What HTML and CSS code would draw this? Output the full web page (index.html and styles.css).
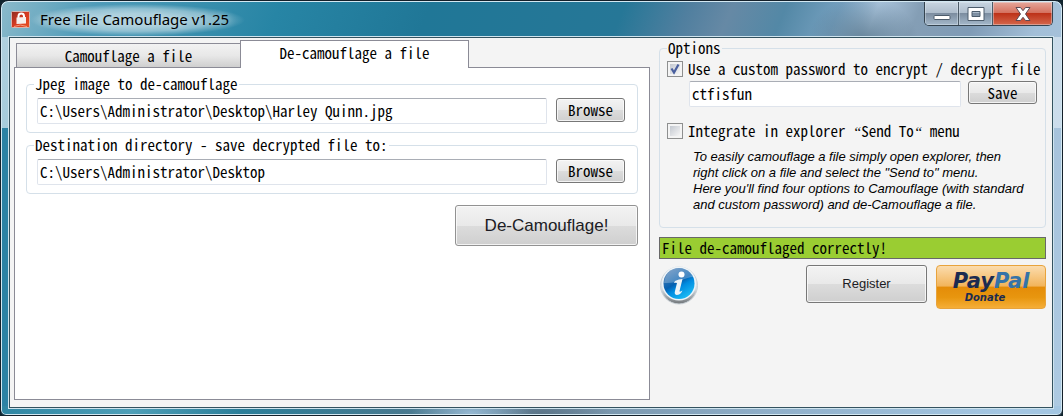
FILE: index.html
```html
<!DOCTYPE html>
<html lang="en">
<head>
<meta charset="utf-8">
<title>Free File Camouflage v1.25</title>
<link rel="stylesheet" href="styles.css">
</head>
<body>
<div class="window">
  <header class="titlebar">
    <svg class="app-icon" viewBox="0 0 19 17" aria-hidden="true">
      <defs><linearGradient id="red" x1="0" y1="0" x2="1" y2="1"><stop offset="0" stop-color="#8d2a20"/><stop offset=".5" stop-color="#d63a22"/><stop offset="1" stop-color="#e8501f"/></linearGradient></defs>
      <rect x=".5" y=".5" width="18" height="16" rx="1" fill="url(#red)" stroke="#d9b4ae"/>
      <path d="M7.500 7.500V5q.2-2.500 2.800-2.500T13 5v2" fill="none" stroke="#fff" stroke-width="2"/>
      <path d="M5.500 6.500l9.500-.5v6.500l-9.500.5z" fill="#f6efed"/>
      <path d="M3 15.500q6-3 13 0" fill="none" stroke="#f49a7c" stroke-width="1"/>
    </svg>
    <h1 class="title">Free File Camouflage v1.25</h1>
    <div class="caption-buttons">
      <button class="caption" type="button" aria-label="Minimize"><svg width="20" height="16" viewBox="0 0 20 16"><rect x="2" y="9.500" width="16" height="4" rx="1" fill="#fff" stroke="#4c5c6c"/></svg></button>
      <button class="caption" type="button" aria-label="Maximize"><svg width="18" height="16" viewBox="0 0 18 16"><path d="M1 1.500h16v13H1zM5 5.500v5h8v-5z" fill="#fff" fill-rule="evenodd" stroke="#4c5c6c"/></svg></button>
      <button class="caption close" type="button" aria-label="Close"><svg width="18" height="16" viewBox="0 0 18 16"><path d="M2 1.500h4.500L9 4.700l2.500-3.200H16L11.500 8l4.500 6.500h-4.500L9 11.300l-2.500 3.200H2L6.500 8z" fill="#fff" stroke="#5b4a55"/></svg></button>
    </div>
  </header>
  <main class="client">
    <section class="tabs">
      <div class="tablist" role="tablist">
        <button class="tab" type="button" role="tab" aria-selected="false">Camouflage a file</button>
        <button class="tab active" type="button" role="tab" aria-selected="true">De-camouflage a file</button>
      </div>
      <div class="panel" role="tabpanel">
        <fieldset class="group">
          <legend><label for="source">Jpeg image to de-camouflage</label></legend>
          <div class="field-row">
            <input class="text" id="source" type="text" value="C:\Users\Administrator\Desktop\Harley Quinn.jpg">
            <button class="btn" type="button">Browse</button>
          </div>
        </fieldset>
        <fieldset class="group">
          <legend><label for="target">Destination directory - save decrypted file to:</label></legend>
          <div class="field-row">
            <input class="text" id="target" type="text" value="C:\Users\Administrator\Desktop">
            <button class="btn" type="button">Browse</button>
          </div>
        </fieldset>
        <button class="btn primary" type="button">De-Camouflage!</button>
      </div>
    </section>
    <section class="side">
      <fieldset class="group options">
        <legend>Options</legend>
        <label class="check"><input type="checkbox" checked><span class="caption-text">Use a custom password to encrypt / decrypt file</span></label>
        <div class="field-row password">
          <input class="text" type="text" value="ctfisfun" aria-label="Custom password">
          <button class="btn" type="button">Save</button>
        </div>
        <label class="check"><input type="checkbox"><span class="caption-text">Integrate in explorer <span class="quote">“</span>Send To<span class="quote">“</span> menu</span></label>
        <p class="hint">To easily camouflage a file simply open explorer, then<br>right click on a file and select the "Send to" menu.<br>Here you'll find four options to Camouflage (with standard<br>and custom password) and de-Camouflage a file.</p>
      </fieldset>
      <output class="status">File de-camouflaged correctly!</output>
      <div class="actions">
        <button class="info" type="button" aria-label="About">
          <svg width="40" height="40" viewBox="0 0 40 40">
            <defs>
              <linearGradient id="rim" x1="0" y1="0" x2="0" y2="1"><stop offset="0" stop-color="#f4f8fb"/><stop offset=".6" stop-color="#d5dce2"/><stop offset="1" stop-color="#6f7478"/></linearGradient>
              <linearGradient id="disc" x1=".2" y1="0" x2=".8" y2="1"><stop offset="0" stop-color="#5583b5"/><stop offset=".45" stop-color="#0560b0"/><stop offset=".6" stop-color="#008be0"/><stop offset="1" stop-color="#20c4f8"/></linearGradient>
            </defs>
            <circle cx="20" cy="20.500" r="18.500" fill="url(#rim)" stroke="#cbd3d9"/>
            <circle cx="20" cy="18.500" r="17" fill="#eef4f8"/>
            <circle cx="20" cy="18.500" r="15.500" fill="url(#disc)"/>
            <path d="M5 18C6 8 13 3 20 3s12 4 14 9c-8 0-15 7-29 6z" fill="#fff" opacity=".25"/>
            <circle cx="22.500" cy="9.500" r="3" fill="#fff"/>
            <path d="M16 16q4-2 7.500-2l-3 12q0 1.500 3-.5-2 4.500-6 4.500-2.500-.5-1.500-4l2-8q-1-.5-3 0z" fill="#eef3f7"/>
          </svg>
        </button>
        <button class="btn register" type="button">Register</button>
        <button class="paypal" type="button"><span class="brand">Pay<span class="pal">Pal</span></span><span class="donate">Donate</span></button>
      </div>
    </section>
  </main>
</div>
</body>
</html>
```
FILE: styles.css
```css
* { box-sizing: border-box; }
body {
  margin: 0;
  background: #10242e;
  color: #000;
  font-family: "Noto Sans Mono CJK SC", "Liberation Mono", monospace;
  font-size: 15px;
  line-height: 16px;
}
button, input { font: inherit; color: inherit; margin: 0; padding: 0; }
.window {
  min-height: 100vh;
  display: flex;
  flex-direction: column;
  padding: 1px 9px 7px 8px;
  border: 1px solid #14202a;
  border-radius: 8px 8px 6px 6px;
  box-shadow: inset 0 0 0 1px #d3e8f2;
  background:
    linear-gradient(#cfe3ee99, #cfe3ee99) left 36px / 8px 91px no-repeat,
    linear-gradient(#e4eef699, #e4eef699) right 36px / 9px 91px no-repeat,
    radial-gradient(ellipse 60px 20px at 470px 412px, #a3c4dfcc, #a3c4df00),
    radial-gradient(ellipse 70px 20px at 540px 412px, #586f82cc, #586f8200),
    linear-gradient(90deg, #2f86a3 0, #4e9fb8 130px, #2b7e99 240px, #47798f 400px, #7794aa 580px, #8faec8 760px, #a3c6e2 1000px) bottom / 100% 9px no-repeat,
    linear-gradient(#2c82a4, #2c82a4) left 127px / 8px 100% no-repeat,
    radial-gradient(ellipse 55px 44px at 862px 40px, #4c6b80bb, #4c6b8000),
    linear-gradient(112deg, #8bbacb 0, #4f9bb8 90px, #2785a5 260px, #207797 400px, #267797 580px, #507f9f 640px, #6689a5 680px, #5388a6 730px, #749fbe 780px, #abc5dd 815px, #849eb5 855px, #7f9bb6 910px, #a3bfd8 970px, #adcae2 100%);
}
.titlebar { display: flex; height: 35px; padding-left: 2px; align-items: center; flex: none; }
.app-icon { width: 19px; height: 17px; }
.title {
  margin: 0 auto 0 0;
  padding: 5px 16px 7px 10px;
  background: radial-gradient(closest-side, #ffffff88 40%, #ffffff66 70%, #ffffff00);
  text-shadow: 0 0 8px #ffffff99;
  font: 15px/20px "Noto Sans", "Open Sans", sans-serif;
}
.caption-buttons {
  display: flex;
  align-self: flex-start;
  height: 24px;
  border: 1px solid #34434f;
  border-top: 0;
  border-radius: 0 0 5px 5px;
  overflow: hidden;
}
.caption {
  display: grid;
  place-items: center;
  width: 34px;
  border: 0;
  border-right: 1px solid #4c5b68;
  background: linear-gradient(#c8d5e1, #adbccb 48%, #7c8da0 50%, #a4b8ca);
  box-shadow: inset 0 0 0 1px #e4edf566;
}
.caption.close { width: 59px; border-right: 0; background: linear-gradient(#e6a79b, #d4705e 48%, #bd3219 50%, #d5674c); }
.client {
  flex: 1;
  display: flex;
  gap: 9px;
  padding: 2px 6px 7px 4px;
  background: #f4f4f4;
  border: 1px solid #34525f;
  box-shadow: 0 0 0 1px #cfe4ee;
}
.tabs { flex: 636; min-width: 0; display: flex; flex-direction: column; }
.tablist { display: flex; align-items: flex-end; padding-left: 2px; }
.tab {
  width: 225px;
  height: 24px;
  border: 1px solid #8b8b96;
  border-bottom: 0;
  background: linear-gradient(#f2f2f2, #e8e8e8 50%, #cfcfcf);
}
.tab.active { position: relative; width: 229px; height: 28px; margin: 0 0 -1px -1px; padding-bottom: 3px; background: #fff; }
.panel {
  flex: 1;
  display: flex;
  flex-direction: column;
  gap: 4px;
  padding: 8px 11px;
  background: #fff;
  border: 1px solid #8b8b96;
}
.group { min-width: 0; margin: 0; padding: 6px 12px 8px 10px; border: 1px solid #d5e0e9; border-radius: 4px; }
.group legend { margin-left: -3px; padding: 0 1px; }
.field-row { display: flex; align-items: flex-start; gap: 9px; }
.text {
  flex: 1;
  min-width: 0;
  height: 26px;
  padding: 0 2px 2px;
  background: #fff;
  border: 1px solid #dfe4ec;
  border-top-color: #a9adb5;
  border-radius: 2px;
}
.btn {
  width: 69px;
  height: 24px;
  border: 1px solid #777;
  border-radius: 3px;
  background: linear-gradient(#f3f3f3, #e9e9e9 50%, #dcdcdc 51%, #cfcfcf);
  box-shadow: inset 0 0 0 1px #fbfbfbcc;
}
.primary { align-self: flex-end; width: 183px; height: 41px; margin-top: 7px; border-color: #929292; color: #1c1c24; font: 17px/20px "Liberation Sans", Arial, sans-serif; }
.side { flex: 387; min-width: 0; }
.options { padding: 4px 8px 14px 7px; }
.options legend { margin-left: 0; }
.check { display: flex; align-items: center; gap: 4px; height: 18px; }
.caption-text { flex: none; padding: 0 1px; background: #f4f4f4; white-space: nowrap; }
.quote { font-family: "Liberation Serif", serif; font-style: italic; }
.check input {
  appearance: none;
  flex: none;
  width: 16px;
  height: 16px;
  border: 1px solid #8e8f8f;
  background: linear-gradient(135deg, #c3c8d0, #f6f6f6) center / 10px 10px no-repeat #f4f4f4;
}
.check input:checked {
  background: url("data:image/svg+xml,%3Csvg xmlns='http://www.w3.org/2000/svg' viewBox='0 0 14 14'%3E%3Cpath d='M3.500 6.500l2.500 4 4.500-8' fill='none' stroke='%234a5f9e' stroke-width='2.200'/%3E%3C/svg%3E") center / 14px 14px no-repeat, linear-gradient(135deg, #c3c8d0, #f6f6f6) center / 10px 10px no-repeat #f4f4f4;
}
.password { gap: 7px; margin: 3px 0 15px 22px; }
.password .btn { height: 23px; }
.hint { margin: 9px 0 0 26px; font: italic 13px/16px "Liberation Sans", Arial, sans-serif; white-space: nowrap; }
.status { display: block; margin-top: 9px; padding: 2px; border: 1px solid #686868; background: #9acd32; }
.actions { display: flex; align-items: flex-start; gap: 9px; margin-top: 6px; }
.info { width: 40px; height: 42px; margin-right: auto; border: 0; background: none; }
.register { width: 121px; height: 38px; color: #1c1c24; font: 13px/16px "Liberation Sans", Arial, sans-serif; }
.paypal {
  display: flex;
  flex-direction: column;
  align-items: center;
  justify-content: center;
  width: 110px;
  height: 44px;
  border: 1px solid #e8a33c;
  border-radius: 4px;
  background: linear-gradient(#fbdcae, #f2b45a 48%, #e48c08 50%, #e8960f 75%, #f5ae38);
  color: #1c2b50;
  font-family: "DejaVu Sans", Verdana, sans-serif;
  font-weight: bold;
  font-style: italic;
}
.brand { font-size: 21px; line-height: 22px; }
.pal { color: #3573a8; }
.donate { margin-right: 12px; font-size: 10px; line-height: 12px; }
```
